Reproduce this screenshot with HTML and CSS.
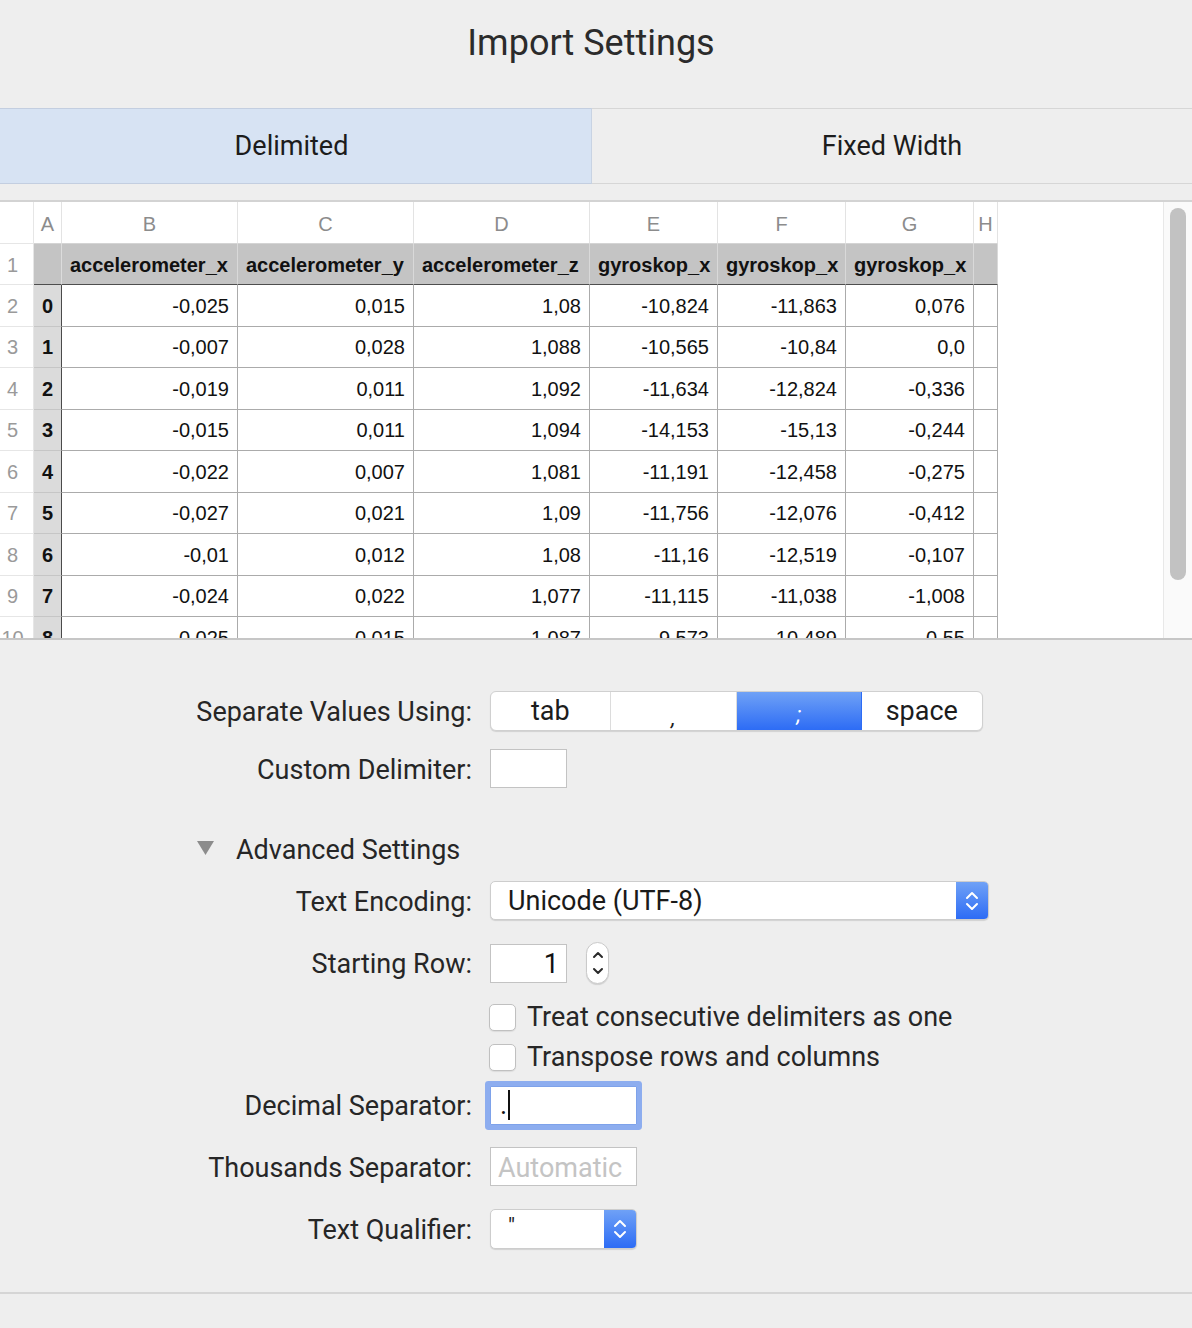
FILE: index.html
```html
<!DOCTYPE html>
<html>
<head>
<meta charset="utf-8">
<title>Import Settings</title>
<link rel="stylesheet" href="styles.css">
</head>
<body>
<div class="window">
  <h1 class="title">Import Settings</h1>

  <div class="tabs">
    <div class="tab tab-active">Delimited</div>
    <div class="tab">Fixed Width</div>
  </div>

  <div class="sheet">
    <div class="sheet-view">
      <div class="grid">
        <div class="c rn lt"></div><div class="c lt">A</div><div class="c lt">B</div><div class="c lt">C</div><div class="c lt">D</div><div class="c lt">E</div><div class="c lt">F</div><div class="c lt">G</div><div class="c lt">H</div>

        <div class="c rn">1</div><div class="c hd hd-a"></div><div class="c hd">accelerometer_x</div><div class="c hd">accelerometer_y</div><div class="c hd">accelerometer_z</div><div class="c hd">gyroskop_x</div><div class="c hd">gyroskop_x</div><div class="c hd">gyroskop_x</div><div class="c hd"></div>

        <div class="c rn">2</div><div class="c ix">0</div><div class="c v">-0,025</div><div class="c v">0,015</div><div class="c v">1,08</div><div class="c v">-10,824</div><div class="c v">-11,863</div><div class="c v">0,076</div><div class="c v"></div>
        <div class="c rn">3</div><div class="c ix">1</div><div class="c v">-0,007</div><div class="c v">0,028</div><div class="c v">1,088</div><div class="c v">-10,565</div><div class="c v">-10,84</div><div class="c v">0,0</div><div class="c v"></div>
        <div class="c rn">4</div><div class="c ix">2</div><div class="c v">-0,019</div><div class="c v">0,011</div><div class="c v">1,092</div><div class="c v">-11,634</div><div class="c v">-12,824</div><div class="c v">-0,336</div><div class="c v"></div>
        <div class="c rn">5</div><div class="c ix">3</div><div class="c v">-0,015</div><div class="c v">0,011</div><div class="c v">1,094</div><div class="c v">-14,153</div><div class="c v">-15,13</div><div class="c v">-0,244</div><div class="c v"></div>
        <div class="c rn">6</div><div class="c ix">4</div><div class="c v">-0,022</div><div class="c v">0,007</div><div class="c v">1,081</div><div class="c v">-11,191</div><div class="c v">-12,458</div><div class="c v">-0,275</div><div class="c v"></div>
        <div class="c rn">7</div><div class="c ix">5</div><div class="c v">-0,027</div><div class="c v">0,021</div><div class="c v">1,09</div><div class="c v">-11,756</div><div class="c v">-12,076</div><div class="c v">-0,412</div><div class="c v"></div>
        <div class="c rn">8</div><div class="c ix">6</div><div class="c v">-0,01</div><div class="c v">0,012</div><div class="c v">1,08</div><div class="c v">-11,16</div><div class="c v">-12,519</div><div class="c v">-0,107</div><div class="c v"></div>
        <div class="c rn">9</div><div class="c ix">7</div><div class="c v">-0,024</div><div class="c v">0,022</div><div class="c v">1,077</div><div class="c v">-11,115</div><div class="c v">-11,038</div><div class="c v">-1,008</div><div class="c v"></div>
        <div class="c rn">10</div><div class="c ix">8</div><div class="c v">-0,025</div><div class="c v">0,015</div><div class="c v">1,087</div><div class="c v">-9,573</div><div class="c v">-10,489</div><div class="c v">-0,55</div><div class="c v"></div>
      </div>
    </div>
    <div class="scrollbar"><div class="thumb"></div></div>
  </div>

  <div class="form">
    <div class="row row-sep">
      <label class="lbl">Separate Values Using:</label>
      <div class="segmented">
        <div class="seg seg-tab">tab</div>
        <div class="seg seg-comma"><span class="punct">,</span></div>
        <div class="seg seg-semi seg-on"><span class="punct">;</span></div>
        <div class="seg seg-space">space</div>
      </div>
    </div>

    <div class="row row-custom">
      <label class="lbl">Custom Delimiter:</label>
      <div class="field field-small"></div>
    </div>

    <div class="advanced">
      <svg class="disclosure" width="17" height="14" viewBox="0 0 17 14"><polygon points="0,0 17,0 8.5,14" fill="#8c8c8c"/></svg>
      <span>Advanced Settings</span>
    </div>

    <div class="row row-enc">
      <label class="lbl">Text Encoding:</label>
      <div class="select select-wide">
        <span class="select-text">Unicode (UTF-8)</span>
        <span class="select-arrows">
          <svg width="14" height="22" viewBox="0 0 14 22"><polyline points="2,8 7,3 12,8" fill="none" stroke="#fff" stroke-width="2" stroke-linecap="round" stroke-linejoin="round"/><polyline points="2,14 7,19 12,14" fill="none" stroke="#fff" stroke-width="2" stroke-linecap="round" stroke-linejoin="round"/></svg>
        </span>
      </div>
    </div>

    <div class="row row-start">
      <label class="lbl">Starting Row:</label>
      <div class="ctl-inline">
        <div class="field field-small field-num">1</div>
        <div class="stepper">
          <svg width="12" height="30" viewBox="0 0 12 30"><polyline points="2,9 6,5 10,9" fill="none" stroke="#2a2a2a" stroke-width="2" stroke-linecap="round" stroke-linejoin="round"/><polyline points="2,21 6,25 10,21" fill="none" stroke="#2a2a2a" stroke-width="2" stroke-linecap="round" stroke-linejoin="round"/></svg>
        </div>
      </div>
    </div>

    <div class="row row-cb1">
      <span class="lbl"></span>
      <label class="check"><span class="box"></span><span>Treat consecutive delimiters as one</span></label>
    </div>

    <div class="row row-cb2">
      <span class="lbl"></span>
      <label class="check"><span class="box"></span><span>Transpose rows and columns</span></label>
    </div>

    <div class="row row-dec">
      <label class="lbl">Decimal Separator:</label>
      <div class="field field-mid field-focus"><span class="dot">.</span><span class="caret"></span></div>
    </div>

    <div class="row row-thou">
      <label class="lbl">Thousands Separator:</label>
      <div class="field field-mid placeholder">Automatic</div>
    </div>

    <div class="row row-qual">
      <label class="lbl">Text Qualifier:</label>
      <div class="select select-narrow">
        <span class="select-text">"</span>
        <span class="select-arrows">
          <svg width="14" height="22" viewBox="0 0 14 22"><polyline points="2,8 7,3 12,8" fill="none" stroke="#fff" stroke-width="2" stroke-linecap="round" stroke-linejoin="round"/><polyline points="2,14 7,19 12,14" fill="none" stroke="#fff" stroke-width="2" stroke-linecap="round" stroke-linejoin="round"/></svg>
        </span>
      </div>
    </div>
  </div>

  <div class="footer-line"></div>
</div>
</body>
</html>
```

FILE: styles.css
```css
* { box-sizing: border-box; }

html, body {
  margin: 0;
  padding: 0;
  background: #eeeeee;
}

body {
  font-family: Roboto, "Liberation Sans", sans-serif;
  color: #262626;
  width: 1192px;
  height: 1328px;
  overflow: hidden;
}

.title {
  margin: 0;
  height: 108px;
  padding-top: 22px;
  padding-right: 10px;
  line-height: 42px;
  font-size: 36px;
  font-weight: 400;
  text-align: center;
  color: #2b2b2b;
}

/* Tabs */
.tabs {
  display: flex;
  height: 76px;
  border-top: 1px solid #d6d6d6;
  border-bottom: 1px solid #d6d6d6;
}

.tab {
  flex: 1;
  display: flex;
  align-items: center;
  justify-content: center;
  font-size: 27px;
  color: #1c1c1c;
}

.tab-active {
  flex: 0 0 592px;
  background: #d7e3f3;
  border-right: 1px solid #c8d3e3;
  margin-top: -1px;
  margin-bottom: -1px;
  border-top: 1px solid #c3cee0;
  border-bottom: 1px solid #c3cee0;
  padding-right: 8px;
}

/* Spreadsheet preview */
.sheet {
  margin-top: 16px;
  height: 440px;
  display: flex;
  background: #ffffff;
  border-top: 2px solid #d3d3d3;
  border-bottom: 2px solid #c6c6c6;
}

.sheet-view {
  flex: 1;
  overflow: hidden;
}

.grid {
  display: grid;
  grid-template-columns: 34px 28px 176px 176px 176px 128px 128px 128px 24px;
  grid-template-rows: 42px 41px repeat(9, 41.5px);
  width: 998px;
  font-family: "Liberation Sans", Arial, sans-serif;
  font-size: 20px;
  color: #111;
}

.c {
  display: flex;
  align-items: center;
  padding-top: 2px;
  border-right: 1px solid #ababab;
  border-bottom: 1px solid #ababab;
  white-space: nowrap;
  overflow: hidden;
}

.lt {
  justify-content: center;
  color: #8c8c8c;
  border-right-color: #e3e3e3;
  border-bottom-color: #d4d4d4;
  padding-top: 4px;
}

.rn {
  justify-content: center;
  color: #9a9a9a;
  padding-right: 8px;
  border-right-color: #e6e6e6;
  border-bottom-color: #e6e6e6;
}

.hd {
  background: #c4c4c4;
  font-weight: 700;
  padding-left: 8px;
  border-right-color: #d9d9d9;
  border-bottom-color: #4e4e4e;
}

.hd-a {
  border-right-color: #dcdcdc;
}

.ix {
  background: #dbdbdb;
  font-weight: 700;
  justify-content: center;
  border-right-color: #4a4a4a;
  border-bottom-color: #c6c6c6;
}

.v {
  justify-content: flex-end;
  padding-right: 8px;
}

.scrollbar {
  flex: 0 0 29px;
  background: #fafafa;
  border-left: 1px solid #e8e8e8;
  padding: 6px 6px 0 6px;
}

.thumb {
  width: 16px;
  height: 372px;
  border-radius: 8px;
  background: #c2c2c2;
}

/* Form */
.form {
  padding-top: 51px;
  font-size: 27px;
}

.row {
  display: grid;
  grid-template-columns: 472px auto;
  column-gap: 18px;
  align-items: center;
  justify-items: start;
}

.lbl {
  justify-self: end;
  color: #262626;
  white-space: nowrap;
  padding-top: 2px;
}

.row-sep { height: 40px; }
.row-custom { height: 39px; margin-top: 18px; }
.row-enc { height: 39px; margin-top: 13px; }
.row-start { height: 42px; margin-top: 22px; }
.row-cb1 { height: 27px; margin-top: 17px; }
.row-cb2 { height: 27px; margin-top: 13px; }
.row-dec { height: 52px; margin-top: 11px; }
.row-thou { height: 39px; margin-top: 16px; }
.row-qual { height: 40px; margin-top: 23px; }

.segmented {
  display: flex;
  width: 493px;
  height: 40px;
  background: #fff;
  border-radius: 6px;
  border: 1px solid #d0d0d0;
  box-shadow: 0 1px 1px rgba(0, 0, 0, 0.12);
  overflow: hidden;
}

.seg {
  display: flex;
  align-items: center;
  justify-content: center;
  border-right: 1px solid #dcdcdc;
  color: #1c1c1c;
}

.seg-tab { width: 120px; }
.seg-comma { width: 127px; }
.seg-semi { width: 125px; }
.seg-space { width: 121px; border-right: none; }

.seg-on {
  background: linear-gradient(#6fa1f6, #2d6cf5);
  color: #fff;
  border-right-color: #2d6cf5;
}

.punct {
  font-size: 22px;
  font-style: italic;
  position: relative;
  top: 6px;
}

.seg-semi .punct { top: 3px; }

.field {
  background: #fff;
  border: 1px solid #c3c3c3;
  height: 39px;
  display: flex;
  align-items: center;
}

.field-small { width: 77px; }
.field-mid { width: 147px; }

.field-num {
  justify-content: flex-end;
  padding-right: 7px;
  padding-top: 2px;
  color: #111;
}

.placeholder {
  color: #c4c4c4;
  padding-left: 7px;
  padding-top: 2px;
}

.field-focus {
  border-color: #7ea2ea;
  border-radius: 1px;
  box-shadow: 0 0 0 5px #8dadef;
  padding-left: 9px;
  color: #111;
}

.dot { line-height: 1; }

.caret {
  display: inline-block;
  width: 2px;
  height: 30px;
  background: #111;
  margin-left: 1px;
}

.advanced {
  display: flex;
  align-items: center;
  height: 38px;
  margin-top: 42px;
  padding-left: 197px;
  gap: 22px;
  color: #262626;
}

.advanced span { padding-top: 2px; }

.disclosure { margin-top: -2px; }

.select {
  display: flex;
  height: 39px;
  background: #fff;
  border: 1px solid #cdcdcd;
  border-radius: 5px;
  box-shadow: 0 1px 1px rgba(0, 0, 0, 0.12);
  overflow: hidden;
}

.select-wide { width: 499px; }
.select-narrow { width: 147px; height: 40px; }

.select-text {
  flex: 1;
  display: flex;
  align-items: center;
  padding-left: 17px;
  color: #1a1a1a;
}

.select-narrow .select-text {
  font-size: 22px;
  align-items: flex-start;
  padding-top: 3px;
}

.select-arrows {
  flex: 0 0 32px;
  display: flex;
  align-items: center;
  justify-content: center;
  background: linear-gradient(#6fa1f6, #2d6cf5);
}

.ctl-inline {
  display: flex;
  align-items: center;
  gap: 19px;
}

.stepper {
  width: 23px;
  height: 42px;
  background: #fff;
  border: 1px solid #cacaca;
  border-radius: 12px;
  box-shadow: 0 1px 1px rgba(0, 0, 0, 0.12);
  display: flex;
  align-items: center;
  justify-content: center;
}

.check {
  display: flex;
  align-items: center;
  gap: 11px;
  margin-left: -1px;
  white-space: nowrap;
  color: #262626;
}

.box {
  width: 27px;
  height: 27px;
  background: #fff;
  border: 1px solid #c0c0c0;
  border-radius: 5px;
  box-shadow: 0 1px 1px rgba(0, 0, 0, 0.08);
}

.footer-line {
  margin-top: 43px;
  height: 2px;
  background: #d5d5d5;
}
```
